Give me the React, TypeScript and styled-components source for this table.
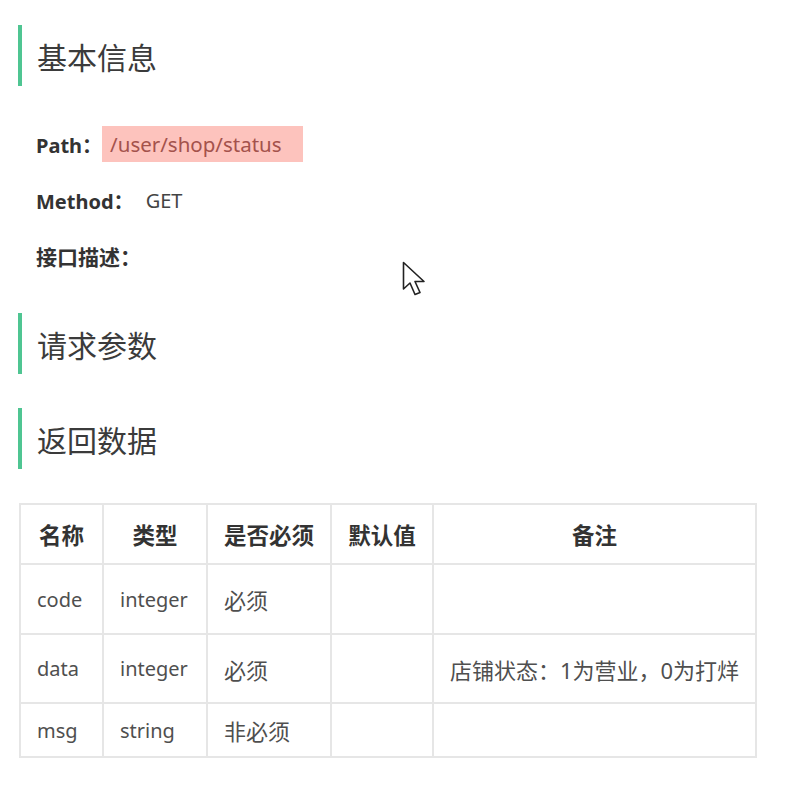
import React from "react";
import styled, { createGlobalStyle } from "styled-components";

const Global = createGlobalStyle`
  html, body { margin: 0; padding: 0; background: #fff; }
  body { font-family: "Noto Sans", "Noto Sans CJK SC", sans-serif; color: #333; }
`;

const Page = styled.div`
  position: relative;
  width: 793px;
  height: 785px;
  padding: 25px 0 0 18px;
  box-sizing: border-box;
  overflow: hidden;
`;

const Heading = styled.h2<{ $gap: number }>`
  margin: ${(p) => p.$gap}px 0 0 0;
  height: 61px;
  box-sizing: border-box;
  display: flex;
  align-items: center;
  padding: 4px 0 0 15px;
  border-left: 4px solid #4fc592;
  font-size: 30px;
  font-weight: 400;
  line-height: 1;
  color: #3b3b3b;
`;

const InfoList = styled.div`
  display: flex;
  flex-direction: column;
  gap: 20px;
  margin-top: 40px;
  padding-left: 18px;
`;

const InfoRow = styled.div`
  display: flex;
  align-items: center;
  height: 36px;
  font-size: 20px;
`;

const Label = styled.span<{ $size?: number }>`
  font-weight: 700;
  color: #333;
  font-size: ${(p) => p.$size ?? 20}px;
`;

const PathValue = styled.span`
  display: inline-flex;
  align-items: center;
  height: 36px;
  padding: 0 21px 0 8px;
  background: #fdc3bd;
  color: #a4524c;
  font-size: 20.5px;
`;

const Plain = styled.span`
  margin-left: 12px;
  color: #444;
`;

const Table = styled.table`
  margin-top: 34px;
  margin-left: 1px;
  border-collapse: collapse;
  width: 738px;
  table-layout: fixed;
  font-size: 20px;
  color: #4f4f4f;
`;

const Th = styled.th`
  height: 58px;
  border: 2px solid #e6e6e6;
  font-weight: 700;
  font-size: 22.5px;
  color: #333;
  text-align: center;
  padding: 0;
`;

const Td = styled.td<{ $center?: boolean; $h: number; $cjk?: boolean }>`
  height: ${(p) => p.$h}px;
  border: 2px solid #e6e6e6;
  padding: ${(p) => (p.$center ? "0" : "0 0 0 16px")};
  text-align: ${(p) => (p.$center ? "center" : "left")};
  font-size: ${(p) => (p.$cjk ? 22 : 20)}px;
  white-space: nowrap;
`;

const Cursor = styled.svg`
  position: absolute;
  left: 402px;
  top: 261px;
`;

const rows = [
  { name: "code", type: "integer", req: "必须", def: "", note: "", h: 68 },
  { name: "data", type: "integer", req: "必须", def: "", note: "店铺状态：1为营业，0为打烊", h: 67 },
  { name: "msg", type: "string", req: "非必须", def: "", note: "", h: 52 },
];

export default function App() {
  return (
    <>
      <Global />
      <Page>
        <Heading $gap={0}>基本信息</Heading>
        <InfoList>
          <InfoRow>
            <Label>Path：</Label>
            <PathValue>/user/shop/status</PathValue>
          </InfoRow>
          <InfoRow>
            <Label>Method：</Label>
            <Plain>GET</Plain>
          </InfoRow>
          <InfoRow>
            <Label $size={21}>接口描述：</Label>
          </InfoRow>
        </InfoList>
        <Heading $gap={39}>请求参数</Heading>
        <Heading $gap={34}>返回数据</Heading>
        <Table>
          <colgroup>
            <col style={{ width: 83 }} />
            <col style={{ width: 104 }} />
            <col style={{ width: 124 }} />
            <col style={{ width: 102 }} />
            <col />
          </colgroup>
          <thead>
            <tr>
              <Th>名称</Th>
              <Th>类型</Th>
              <Th>是否必须</Th>
              <Th>默认值</Th>
              <Th>备注</Th>
            </tr>
          </thead>
          <tbody>
            {rows.map((r) => (
              <tr key={r.name}>
                <Td $h={r.h}>{r.name}</Td>
                <Td $h={r.h}>{r.type}</Td>
                <Td $h={r.h} $cjk>{r.req}</Td>
                <Td $h={r.h}>{r.def}</Td>
                <Td $h={r.h} $center $cjk>{r.note}</Td>
              </tr>
            ))}
          </tbody>
        </Table>
        <Cursor width="28" height="40" viewBox="0 0 28 40">
          <path
            d="M1.5 1.5 L1.5 28 L8 22 L13 33.5 L18 31.5 L13 20.5 L22 20.5 Z"
            fill="#fff"
            stroke="#222"
            strokeWidth="1.6"
            strokeLinejoin="round"
          />
        </Cursor>
      </Page>
    </>
  );
}
